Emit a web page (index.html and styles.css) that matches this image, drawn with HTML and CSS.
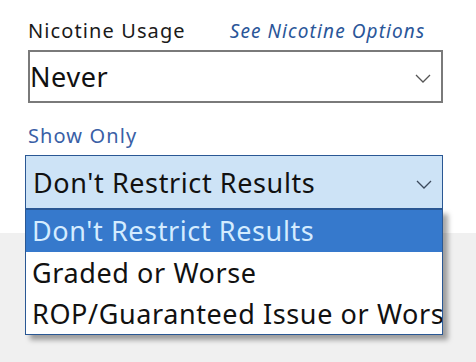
FILE: index.html
```html
<!DOCTYPE html>
<html lang="en">
<head>
    <meta charset="UTF-8">
    <meta name="viewport" content="width=device-width, initial-scale=1.0">
    <title>Filters</title>
    <link rel="stylesheet" href="styles.css">
</head>
<body>
    <div class="panel">
        <div class="label-row">
            <span class="label">Nicotine Usage</span>
            <a class="link" href="#">See Nicotine Options</a>
        </div>
        <div class="combo">
            <span class="combo-text">Never</span>
            <svg class="chevron" width="16" height="9" viewBox="0 0 16 9"><path d="M1 1 L8 8 L15 1" fill="none" stroke="#555" stroke-width="1.3"/></svg>
        </div>

        <div class="label show-label">Show Only</div>
        <div class="dropdown">
            <div class="combo combo-open">
                <span class="combo-text">Don't Restrict Results</span>
                <svg class="chevron" width="16" height="9" viewBox="0 0 16 9"><path d="M1 1 L8 8 L15 1" fill="none" stroke="#3c4a5c" stroke-width="1.3"/></svg>
            </div>
            <!-- open list sits over the rest of the page -->
            <ul class="options">
                <li class="selected">Don't Restrict Results</li>
                <li>Graded or Worse</li>
                <li>ROP/Guaranteed Issue or Worse</li>
            </ul>
        </div>
    </div>
    <div class="footer"></div>
</body>
</html>
```

FILE: styles.css
```css
html, body {
    height: 100%;
}
body {
    margin: 0;
    padding: 0;
    font-family: "Noto Sans", "Open Sans", sans-serif;
    background-color: #f0f0f0;
    display: flex;
    flex-direction: column;
}
.panel {
    position: relative;
    z-index: 2;
    background-color: white;
    height: 233px;
    flex: none;
    padding: 17px 0 0 28px;
    box-sizing: border-box;
}
.footer {
    flex: 1;
    background-color: #f0f0f0;
}
.label-row {
    display: flex;
    align-items: baseline;
    height: 33px;
}
.label {
    font-size: 20px;
    letter-spacing: 1.1px;
    color: #1a1a1a;
}
.link {
    margin-left: 44px;
    font-size: 19px;
    letter-spacing: 1.1px;
    font-style: italic;
    color: #2a5699;
    text-decoration: none;
}
.combo {
    position: relative;
    display: flex;
    align-items: center;
    width: 415px;
    height: 53px;
    box-sizing: border-box;
    border: 2px solid #7a7a7a;
    background-color: white;
    padding-left: 0;
}
.combo-text {
    font-size: 27px;
    letter-spacing: 0.6px;
    color: #111;
}
.chevron {
    position: absolute;
    right: 10px;
    top: 22px;
}
.show-label {
    color: #3a5fa6;
    margin-top: 18px;
    height: 34px;
    line-height: 30px;
}
.dropdown {
    position: relative;
    margin-left: -3px;
    width: 418px;
}
.combo-open {
    width: 418px;
    height: 54px;
    border: 1px solid #2a5894;
    background-color: #cde3f6;
    padding-left: 7px;
}
.combo-open .chevron {
    top: 24px;
}
.options {
    position: absolute;
    z-index: 5;
    top: 54px;
    left: 0;
    width: 418px;
    margin: 0;
    padding: 0;
    list-style: none;
    box-sizing: border-box;
    border: 1px solid #2a5894;
    background-color: white;
    box-shadow: 5px 5px 5px rgba(0, 0, 0, 0.35);
    overflow: hidden;
    white-space: nowrap;
}
.options li {
    height: 41px;
    line-height: 42px;
    padding-left: 6px;
    font-size: 27px;
    letter-spacing: 0.6px;
    color: #111;
}
.options li.selected {
    height: 42px;
    background-color: #3679cc;
    color: #d4ecff;
}
```
